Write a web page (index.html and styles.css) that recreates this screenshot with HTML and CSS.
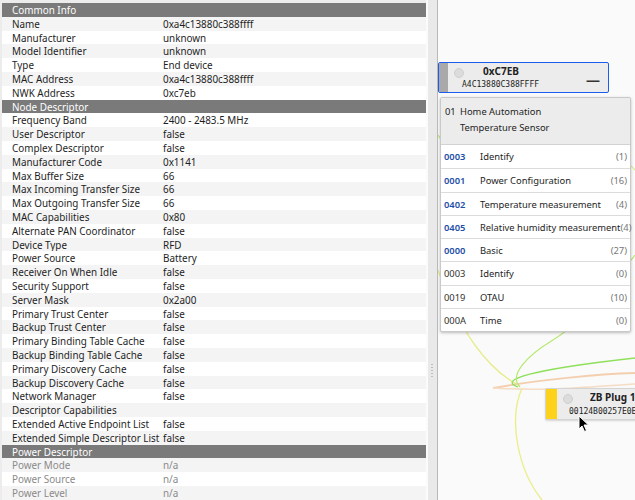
FILE: index.html
```html
<!DOCTYPE html>
<html lang="en">

<head>
    <meta charset="UTF-8">
    <title>node info</title>
    <link rel="stylesheet" href="styles.css">
</head>

<body>
    <div class="app">
        <div class="props">
            <ul class="table">
                <li class="section">Common Info</li>
                <li class="row"><span class="key">Name</span><span>0xa4c13880c388ffff</span></li>
                <li class="row"><span class="key">Manufacturer</span><span>unknown</span></li>
                <li class="row"><span class="key">Model Identifier</span><span>unknown</span></li>
                <li class="row"><span class="key">Type</span><span>End device</span></li>
                <li class="row"><span class="key">MAC Address</span><span>0xa4c13880c388ffff</span></li>
                <li class="row"><span class="key">NWK Address</span><span>0xc7eb</span></li>
                <li class="section">Node Descriptor</li>
                <li class="row"><span class="key">Frequency Band</span><span>2400 - 2483.5 MHz</span></li>
                <li class="row"><span class="key">User Descriptor</span><span>false</span></li>
                <li class="row"><span class="key">Complex Descriptor</span><span>false</span></li>
                <li class="row"><span class="key">Manufacturer Code</span><span>0x1141</span></li>
                <li class="row"><span class="key">Max Buffer Size</span><span>66</span></li>
                <li class="row"><span class="key">Max Incoming Transfer Size</span><span>66</span></li>
                <li class="row"><span class="key">Max Outgoing Transfer Size</span><span>66</span></li>
                <li class="row"><span class="key">MAC Capabilities</span><span>0x80</span></li>
                <li class="row"><span class="key">Alternate PAN Coordinator</span><span>false</span></li>
                <li class="row"><span class="key">Device Type</span><span>RFD</span></li>
                <li class="row"><span class="key">Power Source</span><span>Battery</span></li>
                <li class="row"><span class="key">Receiver On When Idle</span><span>false</span></li>
                <li class="row"><span class="key">Security Support</span><span>false</span></li>
                <li class="row"><span class="key">Server Mask</span><span>0x2a00</span></li>
                <li class="row"><span class="key">Primary Trust Center</span><span>false</span></li>
                <li class="row"><span class="key">Backup Trust Center</span><span>false</span></li>
                <li class="row"><span class="key">Primary Binding Table Cache</span><span>false</span></li>
                <li class="row"><span class="key">Backup Binding Table Cache</span><span>false</span></li>
                <li class="row"><span class="key">Primary Discovery Cache</span><span>false</span></li>
                <li class="row"><span class="key">Backup Discovery Cache</span><span>false</span></li>
                <li class="row"><span class="key">Network Manager</span><span>false</span></li>
                <li class="row"><span class="key">Descriptor Capabilities</span><span></span></li>
                <li class="row"><span class="key">Extended Active Endpoint List</span><span>false</span></li>
                <li class="row"><span class="key">Extended Simple Descriptor List</span><span>false</span></li>
                <li class="section">Power Descriptor</li>
                <li class="row muted"><span class="key">Power Mode</span><span>n/a</span></li>
                <li class="row muted"><span class="key">Power Source</span><span>n/a</span></li>
                <li class="row muted"><span class="key">Power Level</span><span>n/a</span></li>
            </ul>
        </div>

        <div class="splitter"><span class="grip"></span></div>

        <div class="canvas">
            <svg class="links" width="197" height="500" viewBox="0 0 197 500">
                <path d="M0 270 C 20 330, 50 370, 82 386" stroke="#e8ec8a" stroke-width="1.3" fill="none" />
                <path d="M84 388 C 70 420, 80 470, 104 500" stroke="#ecec84" stroke-width="1.3" fill="none" />
                <path d="M55 388 C 100 380, 160 374, 197 373" stroke="#f3cfb0" stroke-width="2" fill="none" />
                <path d="M55 388 C 110 392, 160 386, 197 384" stroke="#f5dcc4" stroke-width="1.5" fill="none" />
                <path d="M80 387 C 60 380, 90 370, 197 358" stroke="#8fe05c" stroke-width="1.3" fill="none" />
                <path d="M82 387 C 70 375, 90 355, 115 340 S 170 290, 197 255" stroke="#b6e870" stroke-width="1.2" fill="none" />
                <path d="M100 100 C 140 140, 180 150, 197 170" stroke="#d6ee94" stroke-width="1.2" fill="none" />
                <path d="M0 135 C 10 150, 20 170, 30 180" stroke="#b6e870" stroke-width="1.2" fill="none" />
            </svg>

            <div class="node node-main">
                <span class="bar"></span>
                <span class="dot"></span>
                <div class="node-text">
                    <span class="node-name">0xC7EB</span>
                    <span class="node-mac">A4C13880C388FFFF</span>
                </div>
                <span class="collapse">&mdash;</span>
            </div>

            <div class="endpoint">
                <div class="ep-head">
                    <div><span class="ep-num">01</span>Home Automation</div>
                    <div class="ep-dev">Temperature Sensor</div>
                </div>
                <ul class="clusters">
                    <li class="cluster server"><span class="cid">0003</span><span class="cname">Identify</span><span class="cnt">(1)</span></li>
                    <li class="cluster server"><span class="cid">0001</span><span class="cname">Power Configuration</span><span class="cnt">(16)</span></li>
                    <li class="cluster server"><span class="cid">0402</span><span class="cname">Temperature measurement</span><span class="cnt">(4)</span></li>
                    <li class="cluster server"><span class="cid">0405</span><span class="cname">Relative humidity measurement</span><span class="cnt">(4)</span></li>
                    <li class="cluster server"><span class="cid">0000</span><span class="cname">Basic</span><span class="cnt">(27)</span></li>
                    <li class="cluster"><span class="cid">0003</span><span class="cname">Identify</span><span class="cnt">(0)</span></li>
                    <li class="cluster"><span class="cid">0019</span><span class="cname">OTAU</span><span class="cnt">(10)</span></li>
                    <li class="cluster"><span class="cid">000A</span><span class="cname">Time</span><span class="cnt">(0)</span></li>
                </ul>
            </div>

            <div class="node node-plug">
                <span class="bar"></span>
                <span class="dot"></span>
                <div class="node-text">
                    <span class="node-name">ZB Plug 1</span>
                    <span class="node-mac">00124B00257E0E</span>
                </div>
            </div>

            <svg class="cursor" width="12" height="18" viewBox="0 0 12 18">
                <path d="M1 1 L1 14 L4 11 L6.5 16.5 L8.5 15.5 L6 10 L10.5 10 Z" fill="#000" stroke="#fff" stroke-width="1" />
            </svg>
        </div>
    </div>
</body>

</html>
```

FILE: styles.css
```css
html,
body {
    padding: 0;
    margin: 0;
}

body {
    width: 635px;
    height: 500px;
    overflow: hidden;
    background: #f0f0f0;
    font-family: "Noto Sans", "Open Sans", sans-serif;
    font-size: 9.9px;
    color: #1e1e1e;
}

ul {
    margin: 0;
    padding: 0;
}

li {
    list-style: none;
}

.app {
    display: flex;
    height: 500px;
}

/* property table */
.props {
    width: 424px;
    padding: 3px 0 0 2px;
    border-right: 2px solid #fbfbfb;
    background: #fff;
    box-shadow: inset 2px 0 0 #ececec, inset 0 3px 0 #ececec;
}

.table {
    overflow: hidden;
}

.section {
    height: 13.8px;
    line-height: 15.4px;
    overflow: hidden;
    padding-left: 10px;
    background: #7a7a7a;
    color: #fff;
}

.row {
    display: flex;
    height: 13.8px;
    line-height: 15.4px;
    overflow: hidden;
    padding-left: 10px;
    white-space: nowrap;
}

.row:nth-child(even) {
    background: #f4f4f4;
}

.key {
    flex: 0 0 151px;
}

.muted {
    color: #8a8a8a;
}

.splitter {
    width: 9px;
    background: #e9e9e9;
    border-right: 1px solid #b9b9b9;
    display: flex;
    align-items: center;
    justify-content: center;
}

.grip {
    width: 2px;
    height: 14px;
    margin-left: -2px;
    margin-top: 242px;
    background: repeating-linear-gradient(#bdbdbd 0 1px, transparent 1px 3px);
}

/* node canvas */
.canvas {
    flex: 1;
    position: relative;
    background: #fafafa;
    overflow: hidden;
}

.links {
    position: absolute;
    left: 0;
    top: 0;
}

.node {
    position: absolute;
    display: flex;
    align-items: stretch;
    background: #ececec;
    box-sizing: border-box;
    white-space: nowrap;
}

.node-main {
    left: 0;
    top: 62px;
    width: 171px;
    height: 31px;
    border: 1px solid #1a5cf0;
    border-radius: 2px;
}

.node-plug {
    left: 107px;
    top: 388px;
    width: 130px;
    height: 32px;
    border: 1px solid #d4d4d4;
    border-radius: 2px;
    box-shadow: 0 1px 2px rgba(0, 0, 0, 0.15);
}

.bar {
    width: 9px;
    background: #a9a9a9;
}

.node-plug .bar {
    width: 11px;
    background: #fdd21a;
}

.dot {
    width: 10px;
    height: 10px;
    margin: 5px 0 0 6px;
    border-radius: 50%;
    background: #dcdcdc;
    border: 1px solid #cfcfcf;
    box-sizing: border-box;
}

.node-text {
    display: flex;
    flex-direction: column;
    padding-top: 1px;
}

.node-name {
    font-weight: bold;
    font-size: 10px;
    line-height: 14px;
    padding-left: 19px;
    color: #222;
}

.node-plug .node-name {
    padding-left: 17px;
    line-height: 15px;
}

.node-mac {
    font-family: "DejaVu Sans Mono", monospace;
    font-size: 8px;
    line-height: 13px;
    color: #222;
    margin-left: -2px;
}

.node-plug .node-mac {
    margin-left: -4px;
}

.collapse {
    margin-left: auto;
    margin-right: 8px;
    margin-top: 7px;
    font-size: 14px;
    font-weight: bold;
    color: #333;
}

/* endpoint popup */
.endpoint {
    position: absolute;
    left: 2px;
    top: 97px;
    width: 189px;
    background: #fff;
    border: 1px solid #c9c9c9;
    border-radius: 2px;
    box-shadow: 0 1px 3px rgba(0, 0, 0, 0.25);
    font-size: 9.4px;
}

.ep-head {
    height: 47px;
    background: #ececec;
    border-bottom: 1px solid #d2d2d2;
    padding: 6px 0 0 4px;
    box-sizing: border-box;
    line-height: 16px;
}

.ep-num {
    display: inline-block;
    width: 15px;
}

.ep-dev {
    padding-left: 15px;
}

.cluster {
    display: flex;
    height: 23.3px;
    line-height: 23px;
    padding: 0 3px;
    border-top: 1px solid #dcdcdc;
    box-sizing: border-box;
    white-space: nowrap;
}

.cluster:first-child {
    border-top: none;
}

.cid {
    flex: 0 0 36px;
    color: #333;
}

.server .cid {
    color: #1d4fa8;
    font-weight: 600;
}

.cname {
    flex: 1 0 auto;
}

.cnt {
    color: #777;
}

.cursor {
    position: absolute;
    left: 140px;
    top: 415px;
}
```
